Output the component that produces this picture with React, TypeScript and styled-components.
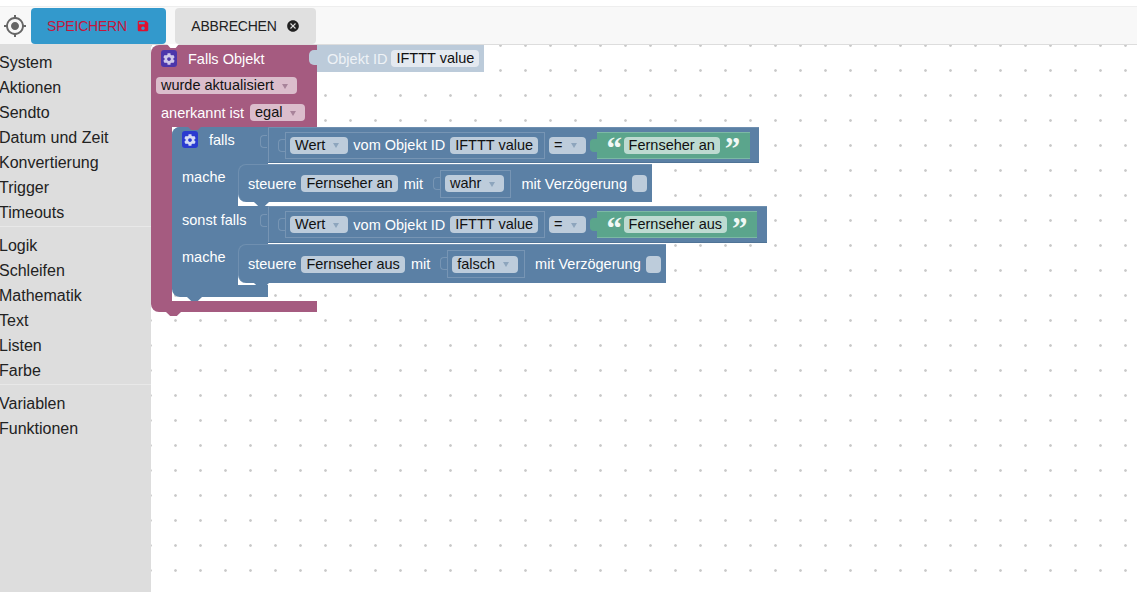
import React, { FC } from "react";
import styled, { createGlobalStyle } from "styled-components";
import { FaCog } from "react-icons/fa";
import { MdCancel, MdMyLocation, MdSave } from "react-icons/md";

const BLUE = "#5b80a5";
const PINK = "#a55b80";
const GREEN = "#5ba58c";
const OUTLINE = "#7795b4";

const GlobalStyle = createGlobalStyle`
  html, body {
    margin: 0;
    padding: 0;
    height: 100%;
    overflow: hidden;
    background: #fff;
    font-family: "Liberation Sans", Arial, sans-serif;
  }
`;

const Page = styled.div`
  height: 592px;
  display: flex;
  flex-direction: column;
  padding-top: 6px;
  box-sizing: border-box;
`;

const Toolbar = styled.div`
  height: 39px;
  flex: none;
  box-sizing: border-box;
  display: flex;
  align-items: flex-start;
  padding: 1px 0 0 3px;
  background: #f8f8f8;
  border-top: 1px solid #eee;
  border-bottom: 1px solid #ddd;
  color: #666;
`;

const Locate = styled.div`
  width: 24px;
  height: 36px;
  margin-right: 4px;
  display: flex;
  align-items: center;
  justify-content: center;
  color: #666;
`;

const Button = styled.div<{ $bg: string; $fg: string; $width: number; $left?: number }>`
  width: ${(p) => p.$width}px;
  height: 36px;
  margin-left: ${(p) => p.$left || 0}px;
  box-sizing: border-box;
  display: flex;
  align-items: center;
  justify-content: center;
  gap: 9px;
  border-radius: 4px;
  background: ${(p) => p.$bg};
  color: ${(p) => p.$fg};
  font-size: 14px;
  letter-spacing: -0.2px;
`;

const Main = styled.div`
  flex: 1;
  display: flex;
  min-height: 0;
`;

const Sidebar = styled.div`
  width: 151px;
  flex: none;
  background: #ddd;
  padding-top: 5px;
  box-sizing: border-box;
`;

const Category = styled.div`
  height: 25px;
  line-height: 25px;
  font-size: 16px;
  text-indent: -1px;
  color: #222;
`;

const Separator = styled.div`
  height: 1px;
  margin: 1px 0 6px;
  background: #e8e8e8;
`;

const Canvas = styled.div`
  flex: 1;
  position: relative;
  background-color: #fff;
  background-image: radial-gradient(circle at 12.5px 12.5px, #c8c8c8 0.9px, transparent 1.7px);
  background-size: 25px 25px;
  background-position: 12px 13px;
`;

const EventBlock = styled.div`
  position: absolute;
  left: 0;
  top: 0;
`;

const EventHead = styled.div`
  position: relative;
  width: 166px;
  height: 82px;
  background: ${PINK};
  border-radius: 8px 0 0 0;
  box-sizing: border-box;
  color: #fff;
  font-size: 14.5px;
`;

const EventRow = styled.div<{ $height: number; $left: number }>`
  height: ${(p) => p.$height}px;
  padding-left: ${(p) => p.$left}px;
  display: flex;
  align-items: center;
  gap: 6px;
  white-space: nowrap;
`;

const EventBody = styled.div`
  display: flex;
`;

const EventArm = styled.div`
  width: 21px;
  flex: none;
  background: ${PINK};
`;

const EventFoot = styled.div`
  position: relative;
  width: 166px;
  height: 11px;
  background: ${PINK};
  border-radius: 0 0 0 8px;
`;

const Notch = styled.div<{ $color: string; $left: number; $side: "top" | "bottom"; $width?: number }>`
  position: absolute;
  z-index: 1;
  left: ${(p) => p.$left}px;
  ${(p) => p.$side}: ${(p) => (p.$side === "top" ? -1 : -4)}px;
  width: ${(p) => p.$width || 15}px;
  height: 4px;
  background: ${(p) => p.$color};
  clip-path: polygon(0 0, 100% 0, 72% 100%, 28% 100%);
`;

const GearBadge = styled.div<{ $bg: string; $fg: string }>`
  width: 16px;
  height: 17px;
  flex: none;
  border-radius: 3px;
  background: ${(p) => p.$bg};
  color: ${(p) => p.$fg};
  display: flex;
  align-items: center;
  justify-content: center;
`;

const EventTitle = styled.span`
  margin-left: 5px;
`;

const ObjectBlock = styled.div`
  position: absolute;
  left: 166px;
  top: 0;
  width: 167px;
  height: 27px;
  box-sizing: border-box;
  padding-left: 10px;
  background: #bccbda;
  display: flex;
  align-items: center;
  gap: 4px;
  color: #eef2f6;
  font-size: 14.5px;
  white-space: nowrap;
`;

const ObjectTab = styled.div`
  position: absolute;
  left: -8px;
  top: 5px;
  width: 8px;
  height: 15px;
  border-radius: 5px 0 0 5px;
  background: #bccbda;
`;

const IfBlock = styled.div`
  position: relative;
  margin-bottom: 4px;
  display: flex;
  flex-direction: column;
  color: #fff;
  font-size: 14.5px;
`;

const ConditionRow = styled.div<{ $width: number; $height: number; $first?: boolean }>`
  position: relative;
  width: ${(p) => p.$width}px;
  height: ${(p) => p.$height}px;
  box-sizing: border-box;
  display: flex;
  align-items: center;
  background: ${BLUE};
  border-top: 1px solid #6f8fb0;
  border-bottom: 1px solid #4f7396;
  border-radius: ${(p) => (p.$first ? "8px 0 0 0" : "0")};
`;

const RowLabel = styled.div<{ $width: number; $top: number; $first?: boolean }>`
  width: ${(p) => p.$width}px;
  flex: none;
  align-self: stretch;
  margin: -1px 0;
  box-sizing: border-box;
  padding: ${(p) => p.$top}px 0 0 10px;
  line-height: 18px;
  display: flex;
  align-items: flex-start;
  gap: 11px;
  white-space: nowrap;
  background: ${BLUE};
  border-radius: ${(p) => (p.$first ? "8px 0 0 0" : "0")};
`;

const StatementRow = styled.div<{ $height: number }>`
  position: relative;
  height: ${(p) => p.$height}px;
  display: flex;
  align-items: flex-start;
  &::before {
    content: "";
    position: absolute;
    left: 66px;
    top: 0;
    width: 30px;
    height: 10px;
    background: ${BLUE};
  }
`;

const StatementLabel = styled.div`
  width: 66px;
  height: 100%;
  flex: none;
  box-sizing: border-box;
  padding: 5px 0 0 10px;
  line-height: 18px;
  background: ${BLUE};
`;

const Statement = styled.div<{ $height: number }>`
  position: relative;
  margin-top: 1px;
  height: ${(p) => p.$height}px;
  box-sizing: border-box;
  padding: 0 5px 0 9px;
  display: flex;
  align-items: center;
  background: ${BLUE};
  border-radius: 8px 0 0 8px;
  border-top: 1px solid #6f8fb0;
  border-left: 1px solid #6f8fb0;
  white-space: nowrap;
`;

const IfFoot = styled.div`
  position: relative;
  width: 96px;
  height: 12px;
  background: ${BLUE};
  border-radius: 0 0 0 8px;
`;

const Slot = styled.div<{ $height: number }>`
  position: relative;
  width: 1px;
  height: ${(p) => p.$height}px;
  flex: none;
  background: ${OUTLINE};
`;

const SlotTab = styled.div<{ $left: number; $top: number; $fill?: string }>`
  position: absolute;
  left: ${(p) => p.$left}px;
  top: ${(p) => p.$top}px;
  width: 7px;
  height: 13px;
  box-sizing: border-box;
  border: 1px solid ${(p) => p.$fill || OUTLINE};
  border-right: none;
  border-radius: 4px 0 0 4px;
  background: ${(p) => p.$fill || "transparent"};
`;

const ValueBox = styled.div<{ $left: number; $right?: number; $height?: number }>`
  position: relative;
  height: ${(p) => p.$height || 27}px;
  margin-left: ${(p) => p.$left}px;
  margin-right: ${(p) => p.$right || 0}px;
  box-sizing: border-box;
  padding: 0 6px 0 4px;
  display: flex;
  align-items: center;
  gap: 5px;
  border: 1px solid ${OUTLINE};
  white-space: nowrap;
`;

const TextBlock = styled.div`
  position: relative;
  height: 27px;
  margin-left: 11px;
  box-sizing: border-box;
  padding: 0 13px 0 10px;
  display: flex;
  align-items: center;
  gap: 5px;
  background: ${GREEN};
  border-top: 1px solid #7cb9a5;
  border-bottom: 1px solid #7cb9a5;
  white-space: nowrap;
`;

const Quote = styled.span`
  width: 12px;
  height: 17px;
  margin-top: -3px;
  overflow: visible;
  font-family: "Liberation Serif", "Times New Roman", serif;
  font-weight: bold;
  font-size: 31px;
  line-height: 27px;
  color: #f0f8f5;
`;

const Chip = styled.span<{ $bg: string; $left?: number }>`
  height: 17px;
  flex: none;
  box-sizing: border-box;
  margin-left: ${(p) => p.$left || 0}px;
  padding: 0 5px;
  display: inline-flex;
  align-items: center;
  border-radius: 4px;
  background: ${(p) => p.$bg};
  color: #111;
  font-size: 14.5px;
  line-height: 17px;
  white-space: nowrap;
`;

const Arrow = styled.i<{ $color: string }>`
  width: 0;
  height: 0;
  margin: 1px 4px 0 8px;
  border-left: 3px solid transparent;
  border-right: 3px solid transparent;
  border-top: 5px solid ${(p) => p.$color};
`;

const Words = styled.span<{ $left?: number }>`
  margin-left: ${(p) => p.$left || 0}px;
`;

const CheckBox = styled.span`
  width: 15px;
  height: 17px;
  flex: none;
  margin-left: 5px;
  border-radius: 4px;
  background: #bdccdb;
`;

const CHIP_BLUE = "#bdccdb";
const CHIP_PINK = "#dbbdcc";
const CHIP_GREEN = "#bddbd1";
const CHIP_OBJECT = "#e4e9f0";

const GROUPS = [
  ["System", "Aktionen", "Sendto", "Datum und Zeit", "Konvertierung", "Trigger", "Timeouts"],
  ["Logik", "Schleifen", "Mathematik", "Text", "Listen", "Farbe"],
  ["Variablen", "Funktionen"],
];

type ConditionProps = {
  label: React.ReactNode;
  text: string;
  width: number;
  height: number;
  first?: boolean;
};

const Condition: FC<ConditionProps> = ({ label, text, width, height, first }) => (
  <ConditionRow $width={width} $height={height} $first={first}>
    <RowLabel $width={96} $top={first ? 4 : 5} $first={first}>
      {label}
    </RowLabel>
    <Slot $height={height - 2}>
      <SlotTab $left={-8} $top={7} />
    </Slot>
    <ValueBox $left={16}>
      <SlotTab $left={-8} $top={6} />
      <Chip $bg={CHIP_BLUE}>
        Wert
        <Arrow $color="#8da5bd" />
      </Chip>
      <Words>vom Objekt ID</Words>
      <Chip $bg={CHIP_BLUE}>IFTTT value</Chip>
    </ValueBox>
    <Chip $bg={CHIP_BLUE} $left={4}>
      =
      <Arrow $color="#8da5bd" />
    </Chip>
    <TextBlock>
      <SlotTab $left={-7} $top={6} $fill={GREEN} />
      <Quote>“</Quote>
      <Chip $bg={CHIP_GREEN}>{text}</Chip>
      <Quote>”</Quote>
    </TextBlock>
  </ConditionRow>
);

type ControlProps = {
  name: string;
  value: string;
  rowHeight: number;
  blockHeight: number;
};

const Control: FC<ControlProps> = ({ name, value, rowHeight, blockHeight }) => (
  <StatementRow $height={rowHeight}>
    <StatementLabel>mache</StatementLabel>
    <Statement $height={blockHeight}>
      <Words>steuere</Words>
      <Chip $bg={CHIP_BLUE} $left={5}>
        {name}
      </Chip>
      <Words $left={6}>mit</Words>
      <ValueBox $left={17} $right={10} $height={28}>
        <SlotTab $left={-8} $top={6} />
        <Chip $bg={CHIP_BLUE}>
          {value}
          <Arrow $color="#8da5bd" />
        </Chip>
      </ValueBox>
      <Words>mit Verzögerung</Words>
      <CheckBox />
      <Notch $color={BLUE} $left={15} $side="bottom" />
    </Statement>
  </StatementRow>
);

const App: FC = () => (
  <Page>
    <GlobalStyle />
    <Toolbar>
      <Locate>
        <MdMyLocation size={24} />
      </Locate>
      <Button $bg="#3399cc" $fg="#c4163c" $width={135}>
        SPEICHERN
        <MdSave size={14} color="#e0102f" />
      </Button>
      <Button $bg="#e0e0e0" $fg="#222" $width={141} $left={9}>
        ABBRECHEN
        <MdCancel size={14} color="#222" />
      </Button>
    </Toolbar>
    <Main>
      <Sidebar>
        {GROUPS.map((group, i) => (
          <React.Fragment key={group[0]}>
            {i > 0 && <Separator />}
            {group.map((name) => (
              <Category key={name}>{name}</Category>
            ))}
          </React.Fragment>
        ))}
      </Sidebar>
      <Canvas>
        <EventBlock>
          <EventHead>
            <Notch $color="#fff" $left={16} $side="top" $width={12} />
            <EventRow $height={27} $left={10}>
              <GearBadge $bg="#4c36ab" $fg="#cfc8ea">
                <FaCog size={12} />
              </GearBadge>
              <EventTitle>Falls Objekt</EventTitle>
            </EventRow>
            <EventRow $height={27} $left={5}>
              <Chip $bg={CHIP_PINK}>
                wurde aktualisiert
                <Arrow $color="#a8839a" />
              </Chip>
            </EventRow>
            <EventRow $height={27} $left={10}>
              anerkannt ist
              <Chip $bg={CHIP_PINK}>
                egal
                <Arrow $color="#a8839a" />
              </Chip>
            </EventRow>
          </EventHead>
          <EventBody>
            <EventArm />
            <IfBlock>
              <Notch $color={PINK} $left={15} $side="top" />
              <Condition
                first
                label={
                  <>
                    <GearBadge $bg="#2a3bd0" $fg="#d5dbf5">
                      <FaCog size={12} />
                    </GearBadge>
                    falls
                  </>
                }
                text="Fernseher an"
                width={587}
                height={36}
              />
              <Control name="Fernseher an" value="wahr" rowHeight={43} blockHeight={38} />
              <Condition label="sonst falls" text="Fernseher aus" width={595} height={37} />
              <Control name="Fernseher aus" value="falsch" rowHeight={42} blockHeight={39} />
              <IfFoot>
                <Notch $color={BLUE} $left={15} $side="bottom" />
              </IfFoot>
            </IfBlock>
          </EventBody>
          <EventFoot>
            <Notch $color={PINK} $left={15} $side="bottom" />
          </EventFoot>
          <ObjectBlock>
            <ObjectTab />
            Objekt ID
            <Chip $bg={CHIP_OBJECT}>IFTTT value</Chip>
          </ObjectBlock>
        </EventBlock>
      </Canvas>
    </Main>
  </Page>
);

export default App;
